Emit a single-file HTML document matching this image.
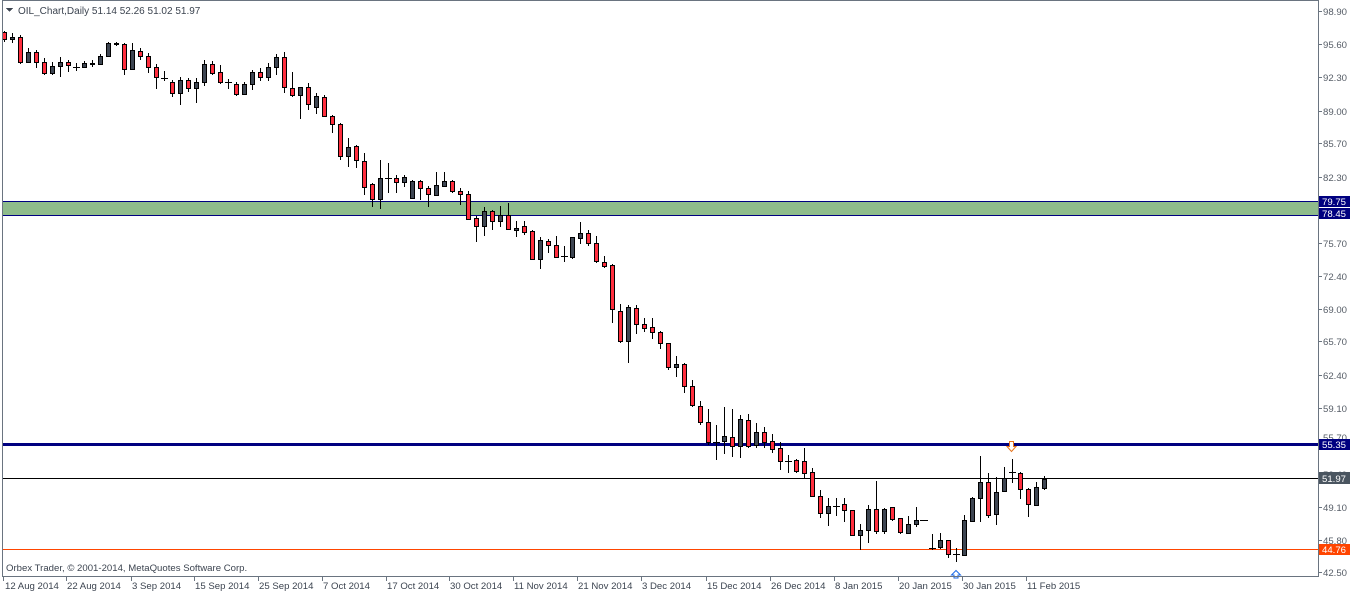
<!DOCTYPE html>
<html><head><meta charset="utf-8"><style>
html,body{margin:0;padding:0;background:#fff;width:1358px;height:594px;overflow:hidden}
svg{display:block}
text{font-family:"Liberation Sans","DejaVu Sans",sans-serif;font-size:10px}
.t{font-size:9.6px}
.r{fill:#ff2e3e;stroke:#000;stroke-width:1}
.d{fill:#3e4652;stroke:#000;stroke-width:1}
</style></head><body>
<svg width="1358" height="594" viewBox="0 0 1358 594" shape-rendering="crispEdges">
<rect x="0" y="0" width="1358" height="594" fill="#fff"/>
<rect x="3" y="201" width="1315" height="15" fill="#8fbc8b"/>
<rect x="3" y="201" width="1315" height="1" fill="#000080"/>
<rect x="3" y="215" width="1315" height="1" fill="#000080"/>
<rect x="3" y="443" width="1315" height="3" fill="#000080"/>
<rect x="3" y="478" width="1315" height="1" fill="#000"/>
<rect x="3" y="549" width="1315" height="1" fill="#ff4500"/>
<path stroke="#000" stroke-width="1" fill="none" transform="translate(0.5,0)" d="M4 31V42M12 33V43M20 35V64M28 48V63M36 50V68M44 58V75M52 62V75M60 57V77M68 60V72M76 63V71M84 61V68M92 60V67M100 54V65M108 42V57M116 42V46M124 43V75M132 43V70M140 48V60M148 53V73M156 64V89M164 71V81M172 80V97M180 77V105M188 78V92M196 78V103M204 60V86M212 61V75M220 65V84M228 79V89M236 82V96M244 82V95M252 70V90M260 68V81M268 63V81M276 54V75M284 52V93M292 72V97M300 87V119M308 83V110M316 93V114M324 95V117M332 115V133M340 123V160M348 138V167M356 145V168M364 153V195M372 183V207M380 160V209M388 163V193M396 175V193M404 175V187M412 180V199M420 180V200M428 186V207M436 172V196M444 172V187M452 180V193M460 188V205M468 191V220M476 216V242M484 207V236M492 210V230M500 206V227M508 203V230M516 221V237M524 221V235M532 230V260M540 237V269M548 239V253M556 236V258M564 246V262M572 237V259M580 222V244M588 230V246M596 236V263M604 256V268M612 264V323M620 304V343M628 305V363M636 305V334M644 318V332M652 318V339M660 331V349M668 343V370M676 356V377M684 363V393M692 380V407M700 401V425M708 409V445M716 425V460M724 407V454M732 409V457M740 415V458M748 414V448M756 423V448M764 427V448M772 434V453M780 442V470M788 455V473M796 459V473M804 448V478M812 468V497M820 490V518M828 498V526M836 498V516M844 498V522M852 510V535M860 524V550M868 505V543M876 481V534M884 508V534M892 507V521M900 518V534M908 516V533M916 507V527M932 534V550M940 533V549M948 540V558M956 548V562M964 515V555M972 497V522M980 456V522M988 473V518M996 477V525M1004 467V492M1012 459V483M1020 472V499M1028 488V517M1036 482V505M1044 476V490"/>
<path stroke="#000" stroke-width="1" fill="none" transform="translate(0,0.5)" d="M73 67H80M161 78H168M225 82H232M385 178H392M561 256H568M713 442H720M785 461H792M833 506H840M920 520H928M929 548H936M953 554H960M1009 472H1016"/>
<g transform="translate(0.5,0.5)">
<rect class="r" x="2" y="32" width="4" height="7"/><rect class="r" x="18" y="37" width="4" height="25"/><rect class="r" x="34" y="52" width="4" height="10"/><rect class="r" x="42" y="62" width="4" height="11"/><rect class="r" x="66" y="62" width="4" height="3"/><rect class="r" x="122" y="44" width="4" height="25"/><rect class="r" x="138" y="51" width="4" height="5"/><rect class="r" x="146" y="56" width="4" height="11"/><rect class="r" x="154" y="67" width="4" height="10"/><rect class="r" x="170" y="82" width="4" height="11"/><rect class="r" x="186" y="80" width="4" height="8"/><rect class="r" x="210" y="64" width="4" height="9"/><rect class="r" x="218" y="72" width="4" height="10"/><rect class="r" x="234" y="84" width="4" height="10"/><rect class="r" x="258" y="72" width="4" height="5"/><rect class="r" x="282" y="57" width="4" height="30"/><rect class="r" x="290" y="88" width="4" height="7"/><rect class="r" x="306" y="87" width="4" height="17"/><rect class="r" x="322" y="97" width="4" height="19"/><rect class="r" x="330" y="116" width="4" height="8"/><rect class="r" x="338" y="124" width="4" height="32"/><rect class="r" x="354" y="146" width="4" height="14"/><rect class="r" x="362" y="161" width="4" height="26"/><rect class="r" x="370" y="184" width="4" height="15"/><rect class="r" x="394" y="178" width="4" height="4"/><rect class="r" x="418" y="181" width="4" height="7"/><rect class="r" x="426" y="188" width="4" height="6"/><rect class="r" x="450" y="181" width="4" height="10"/><rect class="r" x="458" y="191" width="4" height="3"/><rect class="r" x="466" y="194" width="4" height="25"/><rect class="r" x="474" y="218" width="4" height="8"/><rect class="r" x="490" y="211" width="4" height="10"/><rect class="r" x="506" y="215" width="4" height="14"/><rect class="r" x="522" y="226" width="4" height="6"/><rect class="r" x="530" y="231" width="4" height="28"/><rect class="r" x="546" y="241" width="4" height="4"/><rect class="r" x="554" y="245" width="4" height="12"/><rect class="r" x="586" y="233" width="4" height="10"/><rect class="r" x="594" y="243" width="4" height="18"/><rect class="r" x="602" y="262" width="4" height="4"/><rect class="r" x="610" y="265" width="4" height="44"/><rect class="r" x="618" y="311" width="4" height="30"/><rect class="r" x="634" y="308" width="4" height="16"/><rect class="r" x="642" y="324" width="4" height="4"/><rect class="r" x="650" y="327" width="4" height="5"/><rect class="r" x="658" y="332" width="4" height="11"/><rect class="r" x="666" y="343" width="4" height="24"/><rect class="r" x="682" y="364" width="4" height="22"/><rect class="r" x="690" y="386" width="4" height="19"/><rect class="r" x="698" y="406" width="4" height="16"/><rect class="r" x="706" y="422" width="4" height="20"/><rect class="r" x="730" y="437" width="4" height="9"/><rect class="r" x="746" y="420" width="4" height="26"/><rect class="r" x="762" y="432" width="4" height="10"/><rect class="r" x="770" y="441" width="4" height="8"/><rect class="r" x="778" y="448" width="4" height="13"/><rect class="r" x="794" y="460" width="4" height="11"/><rect class="r" x="802" y="461" width="4" height="12"/><rect class="r" x="810" y="472" width="4" height="24"/><rect class="r" x="818" y="496" width="4" height="17"/><rect class="r" x="842" y="504" width="4" height="6"/><rect class="r" x="850" y="510" width="4" height="25"/><rect class="r" x="874" y="509" width="4" height="22"/><rect class="r" x="890" y="507" width="4" height="12"/><rect class="r" x="898" y="518" width="4" height="14"/><rect class="r" x="946" y="540" width="4" height="14"/><rect class="r" x="986" y="482" width="4" height="33"/><rect class="r" x="1018" y="473" width="4" height="16"/><rect class="r" x="1026" y="489" width="4" height="15"/>
<rect class="d" x="10" y="37" width="4" height="2"/><rect class="d" x="26" y="52" width="4" height="10"/><rect class="d" x="50" y="66" width="4" height="7"/><rect class="d" x="58" y="62" width="4" height="4"/><rect class="d" x="82" y="63" width="4" height="4"/><rect class="d" x="90" y="63" width="4" height="1"/><rect class="d" x="98" y="56" width="4" height="8"/><rect class="d" x="106" y="43" width="4" height="13"/><rect class="d" x="114" y="43" width="4" height="1"/><rect class="d" x="130" y="50" width="4" height="19"/><rect class="d" x="178" y="80" width="4" height="13"/><rect class="d" x="194" y="82" width="4" height="6"/><rect class="d" x="202" y="64" width="4" height="18"/><rect class="d" x="242" y="84" width="4" height="10"/><rect class="d" x="250" y="72" width="4" height="12"/><rect class="d" x="266" y="67" width="4" height="10"/><rect class="d" x="274" y="57" width="4" height="10"/><rect class="d" x="298" y="87" width="4" height="8"/><rect class="d" x="314" y="96" width="4" height="11"/><rect class="d" x="346" y="147" width="4" height="9"/><rect class="d" x="378" y="178" width="4" height="21"/><rect class="d" x="402" y="177" width="4" height="5"/><rect class="d" x="410" y="181" width="4" height="17"/><rect class="d" x="434" y="185" width="4" height="10"/><rect class="d" x="442" y="181" width="4" height="5"/><rect class="d" x="482" y="211" width="4" height="15"/><rect class="d" x="498" y="215" width="4" height="6"/><rect class="d" x="514" y="228" width="4" height="2"/><rect class="d" x="538" y="240" width="4" height="19"/><rect class="d" x="570" y="237" width="4" height="20"/><rect class="d" x="578" y="233" width="4" height="5"/><rect class="d" x="626" y="307" width="4" height="34"/><rect class="d" x="674" y="364" width="4" height="3"/><rect class="d" x="722" y="436" width="4" height="5"/><rect class="d" x="738" y="419" width="4" height="27"/><rect class="d" x="754" y="432" width="4" height="13"/><rect class="d" x="826" y="506" width="4" height="7"/><rect class="d" x="858" y="530" width="4" height="5"/><rect class="d" x="866" y="509" width="4" height="21"/><rect class="d" x="882" y="509" width="4" height="22"/><rect class="d" x="906" y="524" width="4" height="9"/><rect class="d" x="914" y="520" width="4" height="4"/><rect class="d" x="938" y="540" width="4" height="7"/><rect class="d" x="962" y="520" width="4" height="35"/><rect class="d" x="970" y="498" width="4" height="23"/><rect class="d" x="978" y="482" width="4" height="16"/><rect class="d" x="994" y="492" width="4" height="22"/><rect class="d" x="1002" y="478" width="4" height="13"/><rect class="d" x="1034" y="487" width="4" height="18"/><rect class="d" x="1042" y="479" width="4" height="9"/>
</g>
<path d="M1009.5 441.5h4v5h2.5l-4.5 5-4.5-5h2.5z" fill="#fff" stroke="#e8741c" stroke-width="1" shape-rendering="geometricPrecision"/>
<path d="M956 570.5l-4.5 4.5h2.5v3h4v-3h2.5z" fill="#fff" stroke="#1c6ae8" stroke-width="1" shape-rendering="geometricPrecision"/>
<rect x="2.5" y="0.5" width="1316" height="576" fill="none" stroke="#6a7480"/>
<path stroke="#6a7480" d="M1319 11.5h3M1319 44.5h3M1319 77.5h3M1319 111.5h3M1319 143.5h3M1319 177.5h3M1319 243.5h3M1319 276.5h3M1319 309.5h3M1319 341.5h3M1319 375.5h3M1319 408.5h3M1319 441.5h3M1319 475.5h3M1319 507.5h3M1319 540.5h3M1319 572.5h3"/>
<g fill="#555c66" class="t">
<text x="1323" y="15" class="t">98.90</text><text x="1323" y="48" class="t">95.60</text><text x="1323" y="81" class="t">92.30</text><text x="1323" y="115" class="t">89.00</text><text x="1323" y="147" class="t">85.70</text><text x="1323" y="181" class="t">82.30</text><text x="1323" y="247" class="t">75.70</text><text x="1323" y="280" class="t">72.40</text><text x="1323" y="313" class="t">69.00</text><text x="1323" y="345" class="t">65.70</text><text x="1323" y="379" class="t">62.40</text><text x="1323" y="412" class="t">59.10</text><text x="1323" y="441" class="t">55.70</text><text x="1323" y="478" class="t">52.40</text><text x="1323" y="511" class="t">49.10</text><text x="1323" y="544" class="t">45.80</text><text x="1323" y="576" class="t">42.50</text>
</g>
<rect x="1319" y="196" width="31" height="11" fill="#000080"/><text x="1322" y="205" fill="#fff" class="t">79.75</text>
<rect x="1319" y="208" width="31" height="11" fill="#000080"/><text x="1322" y="217" fill="#fff" class="t">78.45</text>
<rect x="1319" y="439" width="31" height="11" fill="#000080"/><text x="1322" y="448" fill="#fff" class="t">55.35</text>
<rect x="1319" y="472" width="31" height="12" fill="#4a5560"/><text x="1322" y="482" fill="#fff" class="t">51.97</text>
<rect x="1319" y="544" width="31" height="11" fill="#ff4500"/><text x="1322" y="553" fill="#fff" class="t">44.76</text>
<path stroke="#6a7480" d="M3.5 577v4M66.5 577v4M131.5 577v4M194.5 577v4M258.5 577v4M322.5 577v4M386.5 577v4M449.5 577v4M513.5 577v4M577.5 577v4M641.5 577v4M706.5 577v4M770.5 577v4M834.5 577v4M898.5 577v4M962.5 577v4M1026.5 577v4"/>
<g fill="#3c4450">
<text x="5" y="589" class="t">12 Aug 2014</text><text x="67" y="589" class="t">22 Aug 2014</text><text x="132" y="589" class="t">3 Sep 2014</text><text x="195" y="589" class="t">15 Sep 2014</text><text x="259" y="589" class="t">25 Sep 2014</text><text x="323" y="589" class="t">7 Oct 2014</text><text x="387" y="589" class="t">17 Oct 2014</text><text x="450" y="589" class="t">30 Oct 2014</text><text x="514" y="589" class="t">11 Nov 2014</text><text x="578" y="589" class="t">21 Nov 2014</text><text x="642" y="589" class="t">3 Dec 2014</text><text x="707" y="589" class="t">15 Dec 2014</text><text x="771" y="589" class="t">26 Dec 2014</text><text x="835" y="589" class="t">8 Jan 2015</text><text x="899" y="589" class="t">20 Jan 2015</text><text x="963" y="589" class="t">30 Jan 2015</text><text x="1027" y="589" class="t">11 Feb 2015</text>
</g>
<text x="6" y="571" fill="#3c4450" class="t">Orbex Trader, © 2001-2014, MetaQuotes Software Corp.</text>
<path d="M6 8h7l-3.5 4z" fill="#3c4450"/>
<text x="18" y="14" fill="#3c4450">OIL_Chart,Daily  51.14 52.26 51.02 51.97</text>
</svg>
</body></html>
